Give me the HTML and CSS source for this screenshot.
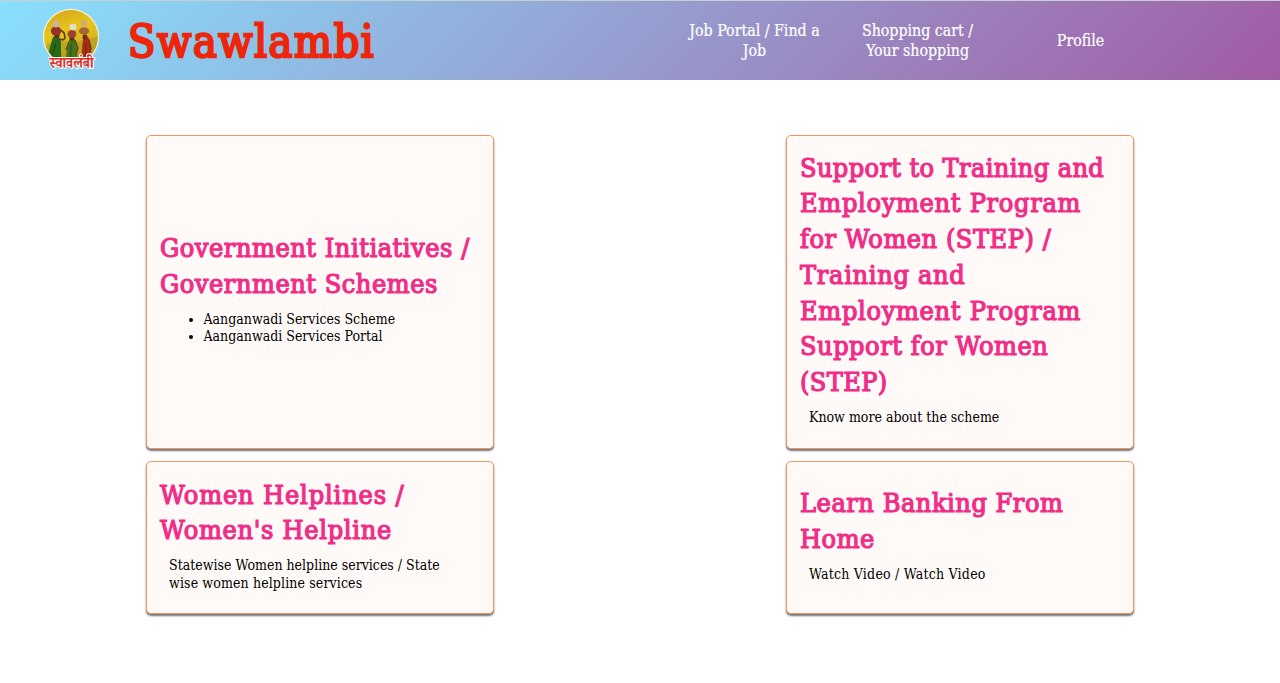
FILE: index.html
```html
<!DOCTYPE html>
<html lang="en">
<head>
<meta charset="utf-8">
<title>Swawlambi</title>
<link rel="stylesheet" href="styles.css">
</head>
<body>
<header class="header">
  <svg class="logo" viewBox="0 0 60 68" role="img" aria-label="Swawlambi logo">
    <defs>
      <clipPath id="disc"><circle cx="30" cy="30" r="26.9"/></clipPath>
      <linearGradient id="sun" x2="0.3" y2="1"><stop stop-color="#cf9b16"/><stop offset=".45" stop-color="#e6c51b"/><stop offset="1" stop-color="#c3a51d"/></linearGradient>
    </defs>
    <circle cx="30" cy="30" r="28.2" fill="#f5eed5"/>
    <g clip-path="url(#disc)">
      <rect width="60" height="60" fill="url(#sun)"/>
      <path d="M2 40l15-8 14 4 27-7v30H2z" fill="#a99525" opacity=".5"/>
      <path d="M12 30q4-3 6 0l2 5 0 9 1 16H4l5-20z" fill="#286817"/>
      <path d="M18 32q8 3 5-6l-3-3" fill="none" stroke="#5a391b" stroke-width="1.6"/>
      <path d="M28 33q3-4 6 0l2 8 1 19H24l2-19z" fill="#477619"/>
      <path d="M34 33l3 8-2 6M28 35l-3 8" fill="none" stroke="#684522" stroke-width="1.4"/>
      <path d="M42 32q3-4 6-1l2 10-2 19H40l1-18z" fill="#b62913"/>
      <path d="M48 33l2 9-2 6" fill="none" stroke="#6b341d" stroke-width="1.4"/>
      <path d="M15 36L9 56M30 37l-1 19M45 36l-1 20" stroke="#1c4315" stroke-width="1.2" opacity=".7"/>
      <ellipse cx="16" cy="28" rx="2.7" ry="3" fill="#553019"/>
      <ellipse cx="31" cy="31" rx="2.4" ry="2.8" fill="#553019"/>
      <ellipse cx="44" cy="30" rx="2.5" ry="2.8" fill="#69301b"/>
      <ellipse cx="15" cy="24" rx="5.2" ry="4.5" fill="#93332a"/>
      <ellipse cx="31" cy="27" rx="4.4" ry="4" fill="#9b4230"/>
      <ellipse cx="43" cy="24" rx="5.2" ry="3.7" fill="#a8652f"/>
      <ellipse cx="15" cy="17" rx="3" ry="3.5" fill="#c7b5a4"/>
      <ellipse cx="32" cy="20" rx="3.5" ry="3.3" fill="#e5ded0"/>
      <ellipse cx="43" cy="16.5" rx="3.5" ry="4" fill="#d2ad67"/>
    </g>
    <text class="logo-text" x="30.5" y="60.5" textLength="44" lengthAdjust="spacingAndGlyphs" text-anchor="middle">स्वावलंबी</text>
  </svg>
  <h1 class="brand">Swawlambi</h1>
  <nav class="nav">
    <a class="nav-link">Job Portal / Find a<br>Job</a>
    <a class="nav-link">Shopping cart /<br>Your shopping</a>
    <a class="nav-link">Profile</a>
  </nav>
</header>
<main class="cards">
  <section class="card tall">
    <h2 class="title">Government Initiatives /<br>Government Schemes</h2>
    <ul class="list"><li>Aanganwadi Services Scheme</li><li>Aanganwadi Services Portal</li></ul>
  </section>
  <section class="card tall">
    <h2 class="title"><span class="tight">Support to Training and</span><br><span class="loose">Employment Program</span><br>for Women (STEP) /<br><span class="loose">Training and</span><br><span class="loose">Employment Program</span><br>Support for Women<br><span class="tight">(STEP)</span></h2>
    <p class="text">Know more about the scheme</p>
  </section>
  <section class="card">
    <h2 class="title"><span class="wide">Women Helplines /</span><br><span class="loose">Women's Helpline</span></h2>
    <p class="text">Statewise Women helpline services / State<br><span class="spaced">wise women helpline services</span></p>
  </section>
  <section class="card">
    <h2 class="title">Learn Banking From<br>Home</h2>
    <p class="text video">Watch Video / Watch Video</p>
  </section>
</main>
</body>
</html>
```
FILE: styles.css
```css
* { box-sizing: border-box; }
body {
  margin: 0;
  background: #fff;
  color: #000;
  font-family: "Roboto Slab", "DejaVu Serif Condensed", "DejaVu Serif", serif;
  font-stretch: condensed;
}
.header {
  display: flex;
  align-items: center;
  height: 80px;
  padding-left: 41px;
  border-top: 1px solid #c9ced3;
  background: linear-gradient(135deg, #88e0fc 0%, #9b82bd 70%, #a15ba5 100%);
}
.logo { width: 60px; height: 68px; flex: none; overflow: visible; }
.logo-text {
  font: bold 15px "Noto Serif Devanagari", "Noto Sans Devanagari", "Noto Sans", serif;
  fill: #dc3029;
  stroke: #fff;
  stroke-width: 2px;
  paint-order: stroke;
}
.brand {
  width: 572px;
  margin: 0;
  padding: 3px 0 0 27px;
  color: #ed260b;
  font-size: 44.5px;
  font-weight: 400;
  line-height: 60px;
  letter-spacing: 1.6px;
  -webkit-text-stroke: 2.4px #ed260b;
}
.nav { display: grid; grid-template-columns: repeat(3, 163px); align-items: center; }
.nav-link { color: #fff; font-size: 15.8px; line-height: 20px; text-align: center; white-space: nowrap; -webkit-text-stroke: .2px #fff; }
.cards {
  display: grid;
  grid-template-columns: 348px 348px;
  grid-template-rows: 314px 153px;
  column-gap: 292px;
  row-gap: 12px;
  padding: 55px 0 60px 146px;
}
.card {
  display: flex;
  flex-direction: column;
  justify-content: center;
  padding: 3px 13px 0;
  border: 1px solid #f19561;
  border-radius: 5px;
  background: #fffaf8;
  box-shadow: 0 2px 2px rgba(0, 0, 0, .55);
  white-space: nowrap;
}
.tall { padding-top: 1px; }
.title { margin: 0; color: #f02d87; font-size: 26.8px; font-weight: 400; line-height: 35.7px; letter-spacing: .55px; -webkit-text-stroke: 1.2px #f02d87; }
.tight { letter-spacing: .4px; }
.loose { letter-spacing: .72px; }
.wide { letter-spacing: .88px; }
.text, .list { margin: 9px 0; font-size: 14px; line-height: 17.7px; }
.text { padding-left: 9px; }
.spaced { letter-spacing: .12px; }
.video { letter-spacing: .22px; }
.list { padding-left: 43.5px; }
```
